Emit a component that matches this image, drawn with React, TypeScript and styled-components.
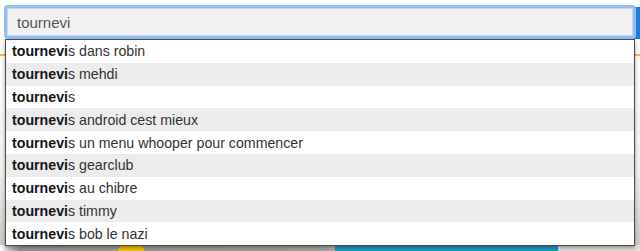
import React from 'react'
import styled, { createGlobalStyle } from 'styled-components'

const GlobalStyle = createGlobalStyle`
  html, body {
    margin: 0;
    padding: 0;
    background: #fff;
  }
  body {
    font-family: "Liberation Sans", Arial, Helvetica, sans-serif;
    overflow: hidden;
  }
`

const Page = styled.div`
  position: relative;
  width: 640px;
  height: 251px;
  overflow: hidden;
`

// the site that sits behind the autocomplete
const Backdrop = styled.div`
  display: flex;
  flex-direction: column;
  height: 100%;
`

const Header = styled.div`
  display: flex;
  justify-content: flex-end;
  align-items: flex-start;
  height: 54px;
  padding-top: 7px;
  box-sizing: border-box;
  background: #fff;
`

const SearchButton = styled.div`
  width: 60px;
  height: 32px;
  background: #1a7fe1;
`

const Rule = styled.div`
  height: 2px;
  background: #f4c20d;
`

const Hero = styled.div`
  flex: 1;
  display: flex;
  align-items: flex-end;
  padding-top: 10px;
  background: linear-gradient(180deg, #fff 0%, #f3f1ee 60%, #c9c6c2 100%);
`

const Strip = styled.div`
  display: flex;
  align-items: flex-end;
  width: 100%;
  height: 6px;
  background: linear-gradient(90deg, #fff 0px, #9a9794 20px, #a7a4a0 320px, #b5b2ae 335px);
`

const Blob = styled.div`
  width: 26px;
  height: 6px;
  margin-left: 118px;
  border-radius: 14px 14px 0 0;
  background: #f5c400;
`

const CtaButton = styled.div`
  margin-left: 191px;
  width: 223px;
  height: 6px;
  background: #1c9ccb;
`

const StripRest = styled.div`
  flex: 1;
  height: 6px;
  background: #e3e0dc;
`

// autocomplete overlay
const SearchField = styled.div`
  position: absolute;
  top: 5px;
  left: 4px;
  width: 632px;
  height: 34px;
  box-sizing: border-box;
  padding: 3px;
  border-radius: 4px;
  background: #93bff2;
`

const SearchInput = styled.div`
  height: 100%;
  box-sizing: border-box;
  padding-left: 9px;
  display: flex;
  align-items: center;
  border: 1px solid #c2d8f4;
  border-radius: 1px;
  background: #f1f1f1;
  color: #555;
  font-size: 15px;
`

const Suggestions = styled.ul`
  position: absolute;
  top: 39px;
  left: 5px;
  width: 630px;
  margin: 0;
  padding: 0;
  list-style: none;
  box-sizing: border-box;
  border: 1px solid #4a4a4a;
  background: #fff;
  box-shadow: 0 2px 4px rgba(0, 0, 0, 0.35);
`

const Suggestion = styled.li<{ $odd: boolean }>`
  display: flex;
  align-items: center;
  height: 22.8px;
  padding-left: 6px;
  font-size: 14.2px;
  color: #333;
  background: ${({ $odd }) => ($odd ? '#ececec' : '#fff')};
  white-space: pre;
`

const Match = styled.b`
  font-weight: 700;
  color: #161616;
`

const query = 'tournevi'

const suggestions = [
  'tournevis dans robin',
  'tournevis mehdi',
  'tournevis',
  'tournevis android cest mieux',
  'tournevis un menu whooper pour commencer',
  'tournevis gearclub',
  'tournevis au chibre',
  'tournevis timmy',
  'tournevis bob le nazi',
]

const App = () => (
  <Page>
    <GlobalStyle />
    <Backdrop>
      <Header>
        <SearchButton />
      </Header>
      <Rule />
      <Hero>
        <Strip>
          <Blob />
          <CtaButton />
          <StripRest />
        </Strip>
      </Hero>
    </Backdrop>

    <SearchField>
      <SearchInput>{query}</SearchInput>
    </SearchField>

    <Suggestions>
      {suggestions.map((s, i) => (
        <Suggestion key={s} $odd={i % 2 === 1}>
          <Match>{s.slice(0, query.length)}</Match>
          {s.slice(query.length)}
        </Suggestion>
      ))}
    </Suggestions>
  </Page>
)

export default App
